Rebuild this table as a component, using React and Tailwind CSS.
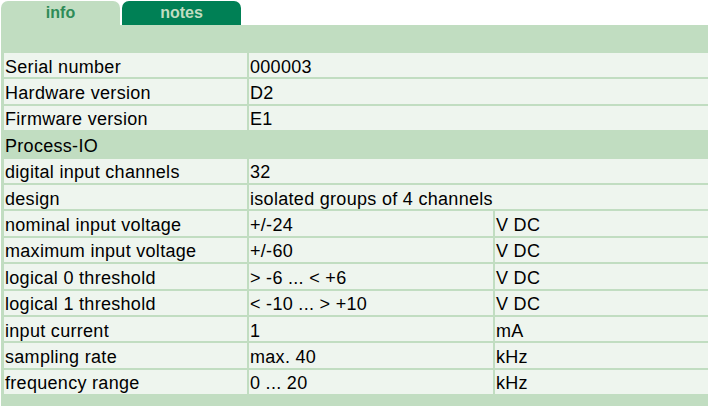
export default function App() {
  const rows = [
    { t: "row", a: "Serial number", b: "000003" },
    { t: "row", a: "Hardware version", b: "D2" },
    { t: "row", a: "Firmware version", b: "E1" },
    { t: "head", a: "Process-IO" },
    { t: "row", a: "digital input channels", b: "32" },
    { t: "row", a: "design", b: "isolated groups of 4 channels" },
    { t: "row3", a: "nominal input voltage", b: "+/-24", c: "V DC" },
    { t: "row3", a: "maximum input voltage", b: "+/-60", c: "V DC" },
    { t: "row3", a: "logical 0 threshold", b: "> -6 ... < +6", c: "V DC" },
    { t: "row3", a: "logical 1 threshold", b: "< -10 ... > +10", c: "V DC" },
    { t: "row3", a: "input current", b: "1", c: "mA" },
    { t: "row3", a: "sampling rate", b: "max. 40", c: "kHz" },
    { t: "row3", a: "frequency range", b: "0 ... 20", c: "kHz" },
  ];
  const cell = "bg-[#eef5ee] pl-[1px] pr-[1px] pt-[3.5px] pb-[0.5px] leading-[20.4px] tracking-[0.3px] text-left align-middle whitespace-nowrap overflow-hidden";
  return (
    <div className="w-[708px] h-[406px] overflow-hidden bg-white text-black text-[18px]" style={{ fontFamily: '"Liberation Sans", Arial, sans-serif' }}>
      <div className="flex gap-[2px] pl-[1px] pt-[1px] h-[25px]">
        <div className="w-[119px] h-[24px] rounded-t-[7px] bg-[#c1ddc1] flex items-center justify-center font-bold text-[16px] text-[#2e8b57]">info</div>
        <div className="w-[119px] h-[24px] rounded-t-[7px] bg-[#008055] flex items-center justify-center font-bold text-[16px] text-[#c1ddc1]">notes</div>
      </div>
      <div className="ml-[1px] bg-[#c1ddc1] pt-[26px] pb-[20px]">
        <table className="table-fixed border-separate border-spacing-[2px] w-[709px] ml-[1px]">
          <colgroup>
            <col className="w-[243px]" />
            <col className="w-[244px]" />
            <col className="w-[214px]" />
          </colgroup>
          <tbody>
            {rows.map((r, i) => {
              if (r.t === "head")
                return (
                  <tr key={i}>
                    <td colSpan={3} className="bg-[#c1ddc1] pl-[1px] pt-[3.5px] pb-[0.5px] leading-[20.4px] tracking-[0.3px]">{r.a}</td>
                  </tr>
                );
              if (r.t === "row")
                return (
                  <tr key={i}>
                    <td className={cell}>{r.a}</td>
                    <td colSpan={2} className={cell}>{r.b}</td>
                  </tr>
                );
              return (
                <tr key={i}>
                  <td className={cell}>{r.a}</td>
                  <td className={cell}>{r.b}</td>
                  <td className={cell}>{r.c}</td>
                </tr>
              );
            })}
          </tbody>
        </table>
      </div>
    </div>
  );
}
